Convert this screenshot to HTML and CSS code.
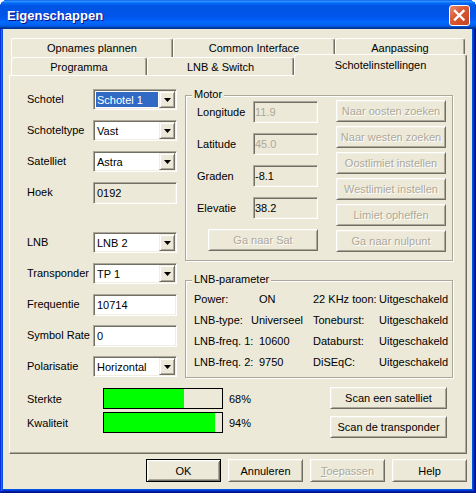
FILE: index.html
```html
<!DOCTYPE html>
<html>
<head>
<meta charset="utf-8">
<link rel="stylesheet" href="styles.css">
</head>
<body>
<div class="window">
  <div class="titlebar">
    <span class="title">Eigenschappen</span>
    <span class="close"><svg width="19" height="19" viewBox="0 0 19 19"><path d="M5 5L13.5 13.5M13.5 5L5 13.5" stroke="#fff" stroke-width="2.4" stroke-linecap="square"/></svg></span>
  </div>
  <div class="client">
    <div class="tabs">
      <div class="tabrow back">
        <div class="tab t1">Opnames plannen</div>
        <div class="tab t1">Common Interface</div>
        <div class="tab t3">Aanpassing</div>
      </div>
      <div class="tabrow front">
        <div class="tab t4">Programma</div>
        <div class="tab t5">LNB &amp; Switch</div>
        <div class="tab sel">Schotelinstellingen</div>
      </div>
    </div>
    <div class="panel">
      <div class="main">
        <div class="leftcol">
          <div class="row"><span class="lbl">Schotel</span><div class="combo"><span class="val hl">Schotel 1</span><span class="drop"><svg width="7" height="4" viewBox="0 0 7 4"><path d="M0 0H7L3.5 4Z" fill="#000"/></svg></span></div></div>
          <div class="row"><span class="lbl">Schoteltype</span><div class="combo"><span class="val">Vast</span><span class="drop"><svg width="7" height="4" viewBox="0 0 7 4"><path d="M0 0H7L3.5 4Z" fill="#000"/></svg></span></div></div>
          <div class="row"><span class="lbl">Satelliet</span><div class="combo"><span class="val">Astra</span><span class="drop"><svg width="7" height="4" viewBox="0 0 7 4"><path d="M0 0H7L3.5 4Z" fill="#000"/></svg></span></div></div>
          <div class="row spaced"><span class="lbl">Hoek</span><div class="edit ro">0192</div></div>
          <div class="row"><span class="lbl">LNB</span><div class="combo"><span class="val">LNB 2</span><span class="drop"><svg width="7" height="4" viewBox="0 0 7 4"><path d="M0 0H7L3.5 4Z" fill="#000"/></svg></span></div></div>
          <div class="row"><span class="lbl">Transponder</span><div class="combo"><span class="val">TP 1</span><span class="drop"><svg width="7" height="4" viewBox="0 0 7 4"><path d="M0 0H7L3.5 4Z" fill="#000"/></svg></span></div></div>
          <div class="row"><span class="lbl">Frequentie</span><div class="edit">10714</div></div>
          <div class="row"><span class="lbl">Symbol Rate</span><div class="edit">0</div></div>
          <div class="row"><span class="lbl">Polarisatie</span><div class="combo"><span class="val">Horizontal</span><span class="drop"><svg width="7" height="4" viewBox="0 0 7 4"><path d="M0 0H7L3.5 4Z" fill="#000"/></svg></span></div></div>
        </div>
        <div class="rightcol">
          <div class="group motor">
            <span class="legend">Motor</span>
            <div class="mleft">
              <div class="mrow"><span class="mlbl">Longitude</span><div class="edit small ro dim">11.9</div></div>
              <div class="mrow"><span class="mlbl">Latitude</span><div class="edit small ro dim">45.0</div></div>
              <div class="mrow"><span class="mlbl">Graden</span><div class="edit small ro">-8.1</div></div>
              <div class="mrow"><span class="mlbl">Elevatie</span><div class="edit small ro">38.2</div></div>
              <div class="btn dis mbtn sat">Ga naar Sat</div>
            </div>
            <div class="mright">
              <div class="btn dis mbtn">Naar oosten zoeken</div>
              <div class="btn dis mbtn">Naar westen zoeken</div>
              <div class="btn dis mbtn">Oostlimiet instellen</div>
              <div class="btn dis mbtn">Westlimiet instellen</div>
              <div class="btn dis mbtn">Limiet opheffen</div>
              <div class="btn dis mbtn">Ga naar nulpunt</div>
            </div>
          </div>
          <div class="group lnbp">
            <span class="legend">LNB-parameter</span>
            <span>Power:</span><span class="ind">ON</span><span>22 KHz toon:</span><span>Uitgeschakeld</span>
            <span>LNB-type:</span><span>Universeel</span><span>Toneburst:</span><span>Uitgeschakeld</span>
            <span>LNB-freq. 1:</span><span class="ind">10600</span><span>Databurst:</span><span>Uitgeschakeld</span>
            <span>LNB-freq. 2:</span><span class="ind">9750</span><span>DiSEqC:</span><span>Uitgeschakeld</span>
          </div>
        </div>
      </div>
      <div class="signal">
        <div class="sleft">
          <div class="srow"><span class="slbl">Sterkte</span><div class="bar"><div class="fill" style="width:68%"></div></div><span class="pct">68%</span></div>
          <div class="srow"><span class="slbl">Kwaliteit</span><div class="bar"><div class="fill" style="width:94%"></div></div><span class="pct">94%</span></div>
        </div>
        <div class="sright">
          <div class="btn scan">Scan een satelliet</div>
          <div class="btn scan">Scan de transponder</div>
        </div>
      </div>
    </div>
    <div class="footer">
      <div class="btn dlg def">OK</div>
      <div class="btn dlg">Annuleren</div>
      <div class="btn dlg dis"><span><u>T</u>oepassen</span></div>
      <div class="btn dlg">Help</div>
    </div>
  </div>
</div>
</body>
</html>
```
FILE: styles.css
```css
* { box-sizing: border-box; }

body {
  margin: 0;
  width: 476px;
  height: 493px;
  background: #fff;
  font: 11px "Liberation Sans", Arial, sans-serif;
  color: #000;
  overflow: hidden;
}

.window {
  width: 476px;
  height: 493px;
  background: #0054E3;
  border-radius: 8px 8px 0 0;
  padding: 0 4px 4px 3px;
  display: flex;
  flex-direction: column;
  box-shadow: inset -1px -1px #00138c, inset 1px 1px #0831d9, inset -2px -2px #001ea0, inset 2px 2px #166aee, inset -3px -3px #003bda, inset 3px 3px #0855dd;
}

.titlebar {
  height: 29px;
  flex: none;
  margin: 0 -4px 0 -3px;
  border-radius: 7px 7px 0 0;
  background: linear-gradient(to bottom, #0058EE 0%, #3593FF 4%, #288EFF 6%, #127DFF 8%, #036FFC 10%, #0262EE 14%, #0057E5 20%, #0054E3 24%, #0055EB 56%, #005BF5 66%, #026AFE 76%, #0062EF 86%, #0052D6 92%, #0040AB 94%, #003092 100%);
  display: flex;
  align-items: center;
  justify-content: space-between;
  padding: 1px 6px 0 7px;
}

.title {
  color: #fff;
  font: bold 13px "Liberation Sans", Arial, sans-serif;
  text-shadow: 1px 1px #0F1089;
}

.close {
  width: 21px;
  height: 21px;
  border: 1px solid #fff;
  border-radius: 3px;
  background: linear-gradient(135deg, #EC8B72 0%, #DA5A35 40%, #C9421C 100%);
  display: flex;
  align-items: center;
  justify-content: center;
}

.client {
  flex: 1;
  background: #ECE9D8;
  padding: 9px 5px 0 6px;
  display: flex;
  flex-direction: column;
}

/* tabs */
.tabrow {
  display: flex;
  padding-left: 2px;
}
.tabrow.back { height: 19px; }
.tabrow.front {
  height: 18px;
  align-items: flex-end;
  position: relative;
  z-index: 2;
}

.tab {
  height: 100%;
  display: flex;
  align-items: center;
  justify-content: center;
  background: #ECE9D8;
  border: 1px solid #fff;
  border-bottom: 0;
  border-right-color: #716F64;
  border-radius: 3px 3px 0 0;
  box-shadow: inset -1px 0 #ACA899;
  white-space: nowrap;
}
.back .tab { padding-bottom: 1px; }
.t1 { width: 162px; }
.t3 { width: 130px; }
.t4 { width: 136px; }
.t5 { width: 147px; }
.tab.sel {
  width: 173px;
  height: 22px;
  margin-bottom: -1px;
  padding-bottom: 2px;
}

/* panel */
.panel {
  height: 379px;
  flex: none;
  border: 1px solid;
  border-color: #fff #716F64 #716F64 #fff;
  box-shadow: inset -1px -1px #ACA899;
  padding: 13px 0 0 17px;
  display: flex;
  flex-direction: column;
}

.main { display: flex; }

.leftcol { width: 150px; }
.row {
  display: flex;
  height: 31px;
  align-items: flex-start;
}
.row.spaced { margin-bottom: 19px; }
.lbl {
  width: 66px;
  line-height: 21px;
  white-space: nowrap;
}

.combo {
  width: 84px;
  height: 21px;
  display: flex;
  background: #fff;
  border: 1px solid;
  border-color: #ACA899 #fff #fff #ACA899;
  box-shadow: inset 1px 1px #716F64, inset -1px -1px #F1EFE2;
  padding: 1px;
}
.val {
  flex: 1;
  margin: 1px;
  padding-left: 1px;
  display: flex;
  align-items: center;
  white-space: nowrap;
  overflow: hidden;
}
.val.hl {
  background: #316AC5;
  color: #fff;
}
.drop {
  width: 16px;
  height: 17px;
  flex: none;
  display: flex;
  align-items: center;
  justify-content: center;
  background: #ECE9D8;
  border: 1px solid;
  border-color: #F1EFE2 #716F64 #716F64 #F1EFE2;
  box-shadow: inset 1px 1px #fff, inset -1px -1px #ACA899;
  padding-top: 1px;
}

.edit {
  width: 84px;
  height: 22px;
  display: flex;
  align-items: center;
  background: #fff;
  border: 1px solid;
  border-color: #ACA899 #fff #fff #ACA899;
  box-shadow: inset 1px 1px #716F64, inset -1px -1px #F1EFE2;
  padding-left: 3px;
  white-space: nowrap;
}
.edit.ro { background: #ECE9D8; }
.edit.small { width: 65px; padding-left: 1px; }
.edit.dim { color: #ACA899; }

.rightcol {
  width: 268px;
  margin-left: 8px;
}

.group {
  position: relative;
  border: 1px solid #ACA899;
  box-shadow: inset 1px 1px #fff, 1px 1px #fff;
}
.legend {
  position: absolute;
  top: -8px;
  left: 6px;
  padding: 0 2px;
  background: #ECE9D8;
  line-height: 13px;
}

.motor {
  margin-top: 6px;
  height: 166px;
  display: flex;
  padding: 5px 0 0 11px;
}
.mleft { width: 139px; }
.mrow {
  display: flex;
  align-items: center;
  height: 22px;
  margin-bottom: 10px;
}
.mlbl { width: 56px; }
.mright {
  margin-top: -1px;
  display: flex;
  flex-direction: column;
  gap: 4px;
}
.mbtn { width: 110px; height: 22px; }
.sat { margin-left: 11px; margin-top: 1px; }

.lnbp {
  margin-top: 19px;
  height: 98px;
  padding: 7px 0 0 8px;
  display: grid;
  grid-template-columns: 57px 62px 66px auto;
  grid-auto-rows: 21px;
  align-items: center;
  white-space: nowrap;
}
.ind { padding-left: 8px; }

/* buttons */
.btn {
  display: flex;
  align-items: center;
  justify-content: center;
  background: #ECE9D8;
  border: 1px solid;
  border-color: #fff #716F64 #716F64 #fff;
  box-shadow: inset 1px 1px #F1EFE2, inset -1px -1px #ACA899;
  white-space: nowrap;
}
.btn.dis {
  color: #ACA899;
  text-shadow: 1px 1px 0 #fff;
}
.btn.def {
  border: 1px solid #000;
  box-shadow: inset 1px 1px #fff, inset -1px -1px #716F64, inset 2px 2px #F1EFE2, inset -2px -2px #ACA899;
}

/* signal */
.signal { display: flex; }
.srow {
  display: flex;
  align-items: center;
  height: 21px;
}
.srow:first-child { margin-top: 1px; }
.srow + .srow { margin-top: 3px; }
.slbl { width: 76px; }
.bar {
  width: 120px;
  height: 21px;
  border: 1px solid #000;
  background: #ECE9D8;
}
.fill {
  height: 100%;
  background: #00FF00;
}
.pct { margin-left: 6px; }
.sright {
  margin-left: auto;
  margin-right: 19px;
  display: flex;
  flex-direction: column;
  gap: 7px;
}
.scan { width: 117px; height: 22px; }

.footer {
  display: flex;
  justify-content: flex-end;
  gap: 7px;
  margin-top: 5px;
}
.dlg { width: 75px; height: 23px; }
```
